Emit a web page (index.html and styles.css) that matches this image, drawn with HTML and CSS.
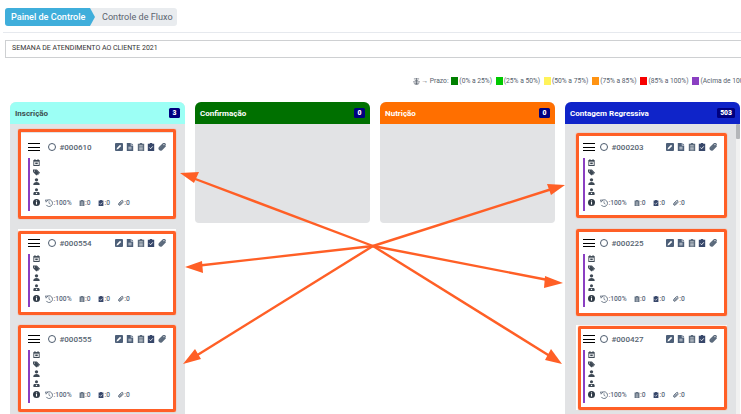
FILE: index.html
```html
<!DOCTYPE html>
<html lang="pt">
<head>
<meta charset="utf-8">
<title>Controle de Fluxo</title>
<link rel="stylesheet" href="styles.css">
</head>
<body>
<svg class="defs" width="0" height="0">
  <symbol id="i-edit" viewBox="0 0 10 10"><rect x="0" y="0" width="10" height="10" rx="1.2" fill="#4d5f78"/><path d="M2 8l.4-1.9 3.9-3.9 1.5 1.5-3.9 3.9z" fill="#fff"/></symbol>
  <symbol id="i-file" viewBox="0 0 10 10"><path d="M1 0h5v3.2h3V10H1z" fill="#4d5f78"/><path d="M6.8 0L9 2.4H6.8z" fill="#4d5f78"/><path d="M3 5.3h4M3 7.3h4" stroke="#fff" stroke-width=".9"/></symbol>
  <symbol id="i-list" viewBox="0 0 10 10"><path d="M3.5 1V0h3v1h2.5v9H1V1z" fill="#5b6a7c"/><path d="M2.8 3.4h4.4M2.8 5.2h4.4M2.8 7h4.4M2.8 8.6h4.4" stroke="#fff" stroke-width=".7"/></symbol>
  <symbol id="i-check" viewBox="0 0 10 10"><path d="M3.5 1V0h3v1h2.5v9H1V1z" fill="#37476a"/><path d="M2.9 5.6l1.6 1.6 2.7-3" fill="none" stroke="#fff" stroke-width="1.1"/></symbol>
  <symbol id="i-clip" viewBox="0 0 10 10"><path d="M8.8 3.6L4 8.4a2 2 0 0 1-2.8-2.8l4.7-4.6a1.4 1.4 0 0 1 2 2L3.3 7.6a.6.6 0 0 1-.9-.9l4-4" fill="none" stroke="#5b6a7c" stroke-width="1.6"/></symbol>
  <symbol id="i-cal" viewBox="0 0 10 10"><path d="M.5 1.5h9V10h-9z" fill="#3d4854"/><path d="M2.8 0v2.4M7.2 0v2.4" stroke="#3d4854" stroke-width="1.2"/><rect x="1.8" y="3.8" width="6.4" height="4.8" fill="#fff"/><rect x="3.2" y="5" width="3.6" height="2.4" fill="#3d4854"/></symbol>
  <symbol id="i-tag" viewBox="0 0 10 10"><path d="M0 .8h4.4l4.4 4.6-3.9 3.9L0 4.4z" fill="#3d4854"/><path d="M5.6.8l4.4 4.6-3.2 3.4-.7-.6 2.6-2.8L4.3.8z" fill="#3d4854"/><circle cx="2" cy="2.8" r=".8" fill="#fff"/></symbol>
  <symbol id="i-user" viewBox="0 0 10 10"><circle cx="5" cy="2.6" r="2.4" fill="#3d4854"/><path d="M.4 10c0-3.4 2-4.4 4.6-4.4S9.6 6.6 9.6 10z" fill="#3d4854"/></symbol>
  <symbol id="i-team" viewBox="0 0 10 10"><circle cx="5" cy="2.6" r="2.2" fill="#3d4854"/><path d="M.6 10V7.6c0-1.3 1-2 2-2h4.8c1 0 2 .7 2 2V10z" fill="#3d4854"/><rect x="4.1" y="6.8" width="1.8" height="1.8" fill="#fff"/></symbol>
  <symbol id="i-info" viewBox="0 0 10 10"><circle cx="5" cy="5" r="5" fill="#2f3a46"/><rect x="4.2" y="4.3" width="1.6" height="3.6" fill="#fff"/><rect x="4.2" y="2" width="1.6" height="1.5" fill="#fff"/></symbol>
  <symbol id="i-hist" viewBox="0 0 10 10"><path d="M2 2.4A4.2 4.2 0 1 1 1.6 7.4" fill="none" stroke="#4d5c6e" stroke-width="1"/><path d="M.4 1.2L3.4 1.4 1.4 4zM5 2.8v2.6l1.8 1" fill="none" stroke="#4d5c6e" stroke-width=".8"/></symbol>
  <symbol id="i-stack" viewBox="0 0 8 8"><path d="M1 1h6M2 3h4M0 4.4h8M1 6h6M4 0v8M2 8l2-2 2 2" fill="none" stroke="#5c6470" stroke-width=".8"/></symbol>
</svg>

<nav class="crumbs">
  <span class="crumb-active">Painel de Controle</span><span class="crumb-current">Controle de Fluxo</span>
</nav>
<hr class="rule">
<div class="title-box">SEMANA DE ATENDIMENTO AO CLIENTE 2021</div>

<div class="legend">
  <span class="legend-key"><svg class="legend-icon"><use href="#i-stack"/></svg> → Prazo:</span>
  <span class="legend-item"><i class="sw sw-1"></i>(0% a 25%)</span>
  <span class="legend-item"><i class="sw sw-2"></i>(25% a 50%)</span>
  <span class="legend-item"><i class="sw sw-3"></i>(50% a 75%)</span>
  <span class="legend-item"><i class="sw sw-4"></i>(75% a 85%)</span>
  <span class="legend-item"><i class="sw sw-5"></i>(85% a 100%)</span>
  <span class="legend-item"><i class="sw sw-6"></i>(Acima de 100%)</span>
</div>

<main class="board">
  <section class="col col-tall">
    <header class="col-head head-cyan"><span>Inscrição</span><b class="count">3</b></header>
    <div class="col-body col-left" id="left"></div>
  </section>
  <section class="col col-short">
    <header class="col-head head-green"><span>Confirmação</span><b class="count">0</b></header>
    <div class="col-body"></div>
  </section>
  <section class="col col-short">
    <header class="col-head head-orange"><span>Nutrição</span><b class="count">0</b></header>
    <div class="col-body"></div>
  </section>
  <section class="col col-tall">
    <header class="col-head head-blue"><span>Contagem Regressiva</span><b class="count">503</b></header>
    <div class="col-body col-right" id="right"></div>
  </section>
</main>

<svg class="arrows" viewBox="0 0 741 414" width="741" height="414">
  <g stroke="#ff5f26" stroke-width="2.4" fill="none">
    <path d="M373 246L190 177"/><path d="M373 246L195 266"/><path d="M373 246L191 359"/>
    <path d="M373 246L555 188"/><path d="M373 246L553 281"/><path d="M373 246L553 358"/>
  </g>
  <g fill="#ff5f26">
    <path d="M180 173l19-1-5 11z"/>
    <path d="M185 267l17-6 1 12z"/>
    <path d="M183 364l12-15 6 10z"/>
    <path d="M565 185l-18-1 4 11z"/>
    <path d="M563 283l-18-7-1 12z"/>
    <path d="M562 364l-11-15-6 11z"/>
  </g>
</svg>

<template id="card">
  <article class="card">
    <div class="card-top">
      <span class="burger"><i></i><i></i><i></i></span>
      <span class="ring"></span>
      <span class="card-id"></span>
      <span class="actions">
        <svg><use href="#i-edit"/></svg><svg><use href="#i-file"/></svg><svg><use href="#i-list"/></svg><svg><use href="#i-check"/></svg><svg class="action-clip"><use href="#i-clip"/></svg>
      </span>
    </div>
    <div class="card-main">
      <svg class="side-icon"><use href="#i-cal"/></svg>
      <svg class="side-icon"><use href="#i-tag"/></svg>
      <svg class="side-icon"><use href="#i-user"/></svg>
      <svg class="side-icon"><use href="#i-team"/></svg>
      <div class="foot">
        <svg class="side-icon"><use href="#i-info"/></svg>
        <span class="stats">
          <span class="stat stat-first"><svg class="stat-hist"><use href="#i-hist"/></svg>:100%</span>
          <span class="stat"><svg><use href="#i-list"/></svg>:0</span>
          <span class="stat"><svg><use href="#i-check"/></svg>:0</span>
          <span class="stat"><svg><use href="#i-clip"/></svg>:0</span>
        </span>
      </div>
    </div>
    <span class="mark"></span>
  </article>
</template>
<script src="app.js"></script>
</body>
</html>
```

FILE: app.js
```js
var data = { left: ["#000610", "#000554", "#000555"], right: ["#000203", "#000225", "#000427"] };
var tpl = document.getElementById("card");
Object.keys(data).forEach(function (key) {
  var host = document.getElementById(key);
  data[key].forEach(function (id) {
    var node = tpl.content.cloneNode(true);
    node.querySelector(".card-id").textContent = id;
    host.appendChild(node);
  });
});
```

FILE: styles.css
```css
* { box-sizing: border-box; }
html, body { margin: 0; height: 414px; overflow: hidden; background: #fff; }
body { position: relative; width: 741px; font-family: Roboto, "Liberation Sans", sans-serif; color: #4d5c6e; }
.defs { position: absolute; }

.crumbs { display: flex; width: 172px; height: 18px; margin: 8px 0 0 5px; background: #e9ecef; border-radius: 3px; font-size: 9.1px; line-height: 18px; }
.crumb-active { flex: none; width: 90px; padding-left: 6px; background: #3faedb; color: #fff; font-weight: 500; border-radius: 3px 0 0 3px; clip-path: polygon(0 0, 85px 0, 90px 50%, 85px 100%, 0 100%); white-space: nowrap; }
.crumb-current { padding-left: 7px; color: #5c6470; white-space: nowrap; }

.rule { height: 1px; margin: 6px 0 0 3px; border: 0; background: #e6e9ee; }
.title-box { height: 18px; margin: 7px 0 0 5px; padding-left: 6px; border: 1px solid #ced0d2; border-right: 0; font-size: 7px; line-height: 15px; color: #333; white-space: nowrap; }

.legend { display: flex; align-items: center; gap: 3.8px; height: 10px; margin: 18px 0 0 413px; font-size: 6.7px; color: #55606c; white-space: nowrap; }
.legend-key { display: flex; align-items: center; gap: 1.5px; margin-right: -1px; }
.legend-icon { width: 7px; height: 7px; }
.legend-item { display: flex; align-items: center; gap: 1px; }
.sw { display: block; width: 7px; height: 8px; }
.sw-1 { background: #008000; }
.sw-2 { background: #00c800; }
.sw-3 { background: #fff35a; }
.sw-4 { background: #ff9312; }
.sw-5 { background: #f70000; }
.sw-6 { background: #8a3fc2; }

.board { display: flex; gap: 10px; margin: 16px 0 0 10px; align-items: flex-start; }
.col { width: 175px; border-radius: 6px 6px 4px 4px; background: #e2e3e5; overflow: hidden; }
.col-tall { height: 330px; }
.col-short { height: 121px; }
.col-head { display: flex; align-items: center; justify-content: space-between; height: 22px; padding: 0 5px; font-size: 8px; font-weight: 700; color: #fff; }
.head-cyan { background: #9cfff5; color: #3d5050; }
.head-green { background: #007000; }
.head-orange { background: #ff6f00; }
.head-blue { background: #0f24c9; }
.count { min-width: 11px; height: 10px; padding: 0 3px; border-radius: 1.5px; background: #00007f; color: #fff; font-size: 6.8px; line-height: 10px; text-align: center; }
.col-body { position: relative; padding-top: 9px; height: 308px; }
.col-left { padding-left: 8px; }
.col-right { padding-left: 11px; }
.col-right::before { content: ""; position: absolute; top: 0; right: 0; bottom: 0; width: 4px; background: #f1f1f1; }
.col-right::after { content: ""; position: absolute; top: 0; right: 0; width: 4px; height: 15px; border-radius: 1px; background: #b4b6b9; }

.card { position: relative; display: block; width: 158px; height: 85px; margin-bottom: 11px; padding: 10px 9px 0 10px; background: #fff; }
.col-right .card { width: 151px; padding-left: 7px; }
.card-top { display: flex; align-items: center; height: 8px; }
.burger { display: flex; flex-direction: column; gap: 2.4px; width: 12px; flex: none; }
.burger i { display: block; height: 1px; background: #000; }
.ring { flex: none; width: 8px; height: 8px; margin-left: 8px; border: 1px solid #4d5c6e; border-radius: 50%; }
.col-right .ring { margin-left: 5px; }
.card-id { margin-left: 3.5px; font-size: 8px; font-weight: 500; color: #55626f; }
.actions { display: flex; gap: 2.75px; margin-left: auto; }
.actions svg { display: block; width: 8px; height: 8px; }
.actions .action-clip { width: 9px; }
.card-main { display: flex; flex-direction: column; gap: 2.5px; height: 53px; margin-top: 7px; padding: 1px 0 0 3px; border-left: 2px solid #8a3fc2; }
.side-icon { display: block; flex: none; width: 7px; height: 7px; }
.foot { display: flex; align-items: center; height: 7px; margin-top: 1.5px; }
.stats { display: flex; align-items: center; margin: 1px 0 0 5px; font-size: 6.7px; font-weight: 500; color: #5c6a7c; }
.stat { display: flex; align-items: center; margin-left: 7.5px; white-space: nowrap; }
.stat-first { width: 26px; margin-left: 0; }
.stat svg { flex: none; width: 6px; height: 8px; margin-right: .5px; }
.stat .stat-hist { width: 8px; height: 8px; }

/* annotation rectangles drawn over the cards */
.mark { position: absolute; top: 0; left: 0; right: 0; height: 85px; border: 3px solid #ff5f26; border-radius: 2px; box-shadow: 0 0 1px #ff5f26; }
.col-left .card:nth-child(1) .mark { top: -4px; height: 90px; }
.col-left .card:nth-child(2) .mark { top: 2px; height: 84px; }
.col-left .card:nth-child(3) .mark { height: 87px; }
.col-right .card:nth-child(2) .mark { height: 87px; }
.col-right .card:nth-child(3) .mark { top: 1px; left: 2px; height: 84px; }

.arrows { position: absolute; top: 0; left: 0; pointer-events: none; }
```
